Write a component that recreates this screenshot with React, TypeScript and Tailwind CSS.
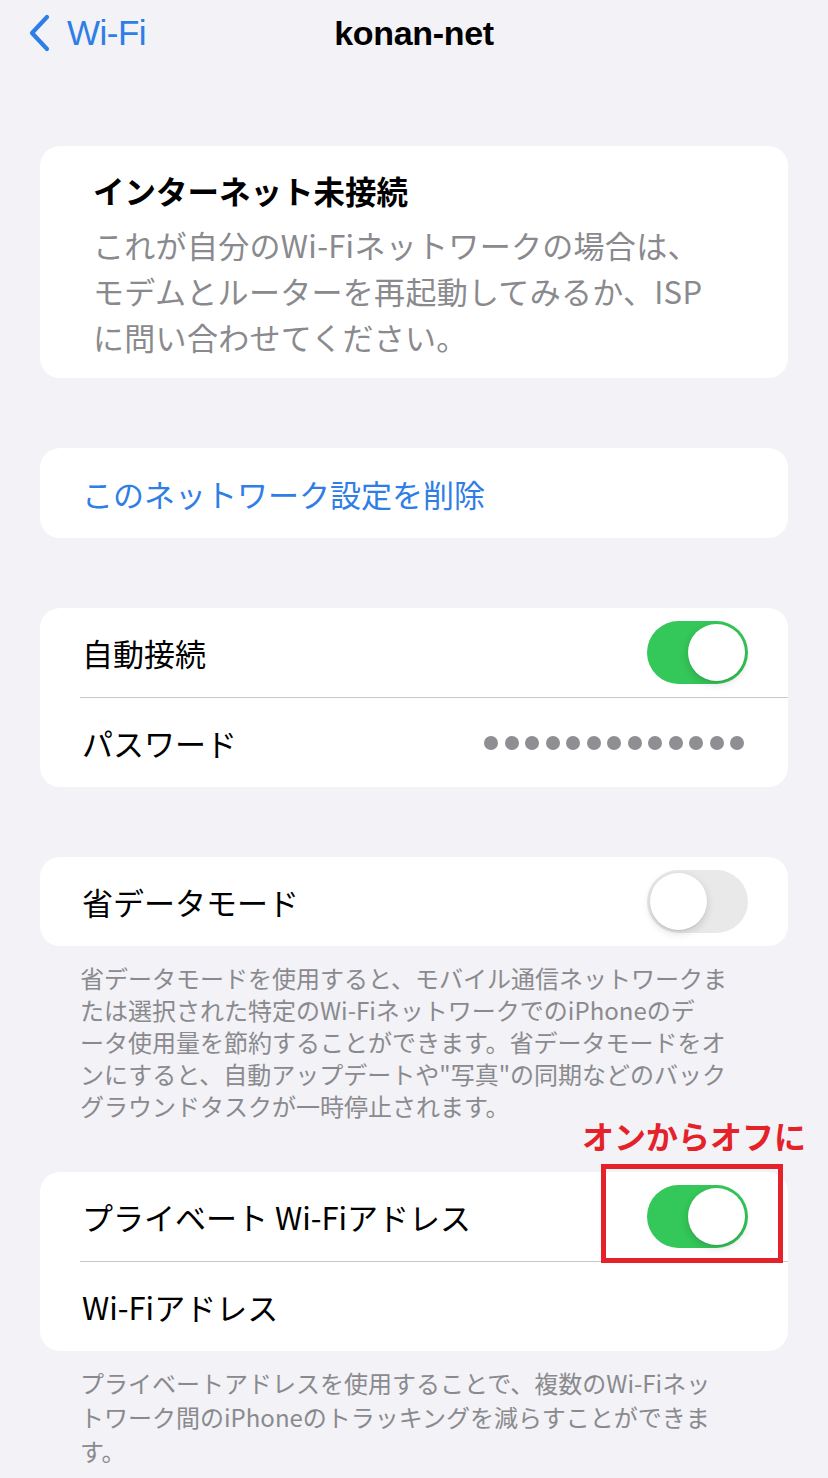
import React from "react"

const jp = "font-['Noto_Sans_CJK_JP','Noto_Sans',sans-serif]"

function Toggle({ on }: { on: boolean }) {
  return (
    <div
      className={`relative w-[101px] h-[63px] rounded-full ${on ? "bg-[#34c759]" : "bg-[#e9e9ea]"}`}
    >
      <div
        className={`absolute top-[3px] w-[57px] h-[57px] rounded-full bg-white shadow-[0_3px_8px_rgba(0,0,0,0.15),0_1px_1px_rgba(0,0,0,0.08)] ${
          on ? "right-[3px]" : "left-[3px]"
        }`}
      />
    </div>
  )
}

function Row({ label, children, divider }: { label: string; children?: React.ReactNode; divider?: boolean }) {
  return (
    <div className="relative">
      <div className="h-[89px] flex items-center justify-between pl-[42px] pr-[40px]">
        <span className="text-[31px] text-black leading-none">{label}</span>
        {children}
      </div>
      {divider && <div className="ml-[40px] h-px bg-[#c8c8cc]" />}
    </div>
  )
}

export default function App() {
  return (
    <div className={`relative w-[828px] h-[1478px] overflow-hidden bg-[#f2f2f7] ${jp}`}>
      {/* Nav bar */}
      <div className="relative h-[66px] flex items-center">
        <div className="flex items-center pl-[27px] gap-[16px] text-[#2f7ee6]">
          <svg width="24" height="38" viewBox="0 0 24 38" fill="none">
            <path d="M20 3 L5 19 L20 35" stroke="currentColor" strokeWidth="4.2" strokeLinecap="round" strokeLinejoin="round" />
          </svg>
          <span className="font-['Liberation_Sans',Arial,sans-serif] text-[35px] tracking-[-0.5px]">Wi-Fi</span>
        </div>
        <div className="absolute inset-0 flex items-center justify-center pointer-events-none">
          <span className="font-['Liberation_Sans',Arial,sans-serif] font-bold text-[34px] text-black tracking-[-0.3px]">
            konan-net
          </span>
        </div>
      </div>

      <div className="px-[40px] pt-[80px] flex flex-col">
        {/* Not connected card */}
        <div className="bg-white rounded-[20px] pl-[53px] pr-[30px] pt-[24px] pb-[18px]">
          <div className="text-[31.5px] font-bold leading-[40px] text-black">インターネット未接続</div>
          <div className="mt-[12px] text-[31px] leading-[46px] text-[#8a8a8e] tracking-[0.3px]">
            これが自分のWi-Fiネットワークの場合は、
            <br />
            モデムとルーターを再起動してみるか、ISP
            <br />
            に問い合わせてください。
          </div>
        </div>

        {/* Forget network */}
        <div className="mt-[70px] bg-white rounded-[20px] h-[90px] flex items-center pl-[42px]">
          <span className="text-[31px] text-[#2f7ee6] leading-none">このネットワーク設定を削除</span>
        </div>

        {/* Auto join / password */}
        <div className="mt-[70px] bg-white rounded-[20px] overflow-hidden">
          <Row label="自動接続" divider>
            <Toggle on />
          </Row>
          <Row label="パスワード">
            <div className="flex gap-[6.5px] pr-[4px]">
              {Array.from({ length: 13 }).map((_, i) => (
                <span key={i} className="w-[14px] h-[14px] rounded-full bg-[#8e8e93]" />
              ))}
            </div>
          </Row>
        </div>

        {/* Low data mode */}
        <div className="mt-[70px] bg-white rounded-[20px] overflow-hidden">
          <Row label="省データモード">
            <Toggle on={false} />
          </Row>
        </div>
        <p className="pl-[40px] pr-[40px] pt-[16px] text-[24px] leading-[32px] text-[#8a8a8e]">
          省データモードを使用すると、モバイル通信ネットワークま
          <br />
          たは選択された特定のWi-FiネットワークでのiPhoneのデ
          <br />
          ータ使用量を節約することができます。省データモードをオ
          <br />
          ンにすると、自動アップデートや"写真"の同期などのバック
          <br />
          グラウンドタスクが一時停止されます。
        </p>

        {/* Private address */}
        <div className="mt-[50px] bg-white rounded-[20px] overflow-hidden">
          <Row label="プライベート Wi-Fiアドレス" divider>
            <Toggle on />
          </Row>
          <Row label="Wi-Fiアドレス" />
        </div>
        <p className="pl-[40px] pr-[40px] pt-[15px] text-[24px] leading-[34px] text-[#8a8a8e]">
          プライベートアドレスを使用することで、複数のWi-Fiネッ
          <br />
          トワーク間のiPhoneのトラッキングを減らすことができま
          <br />
          す。
        </p>
      </div>

      {/* Annotation overlay */}
      <div className="absolute left-[582px] top-[1114px] text-[32px] font-bold text-[#e52129] leading-[42px]">
        オンからオフに
      </div>
      <div className="absolute left-[601px] top-[1164px] w-[182px] h-[99px] border-[5px] border-[#e52129]" />
    </div>
  )
}
